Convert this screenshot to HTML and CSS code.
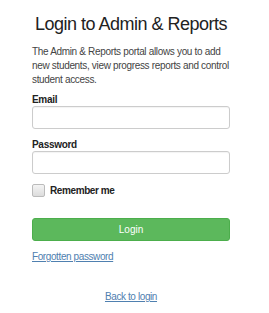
FILE: index.html
```html
<!DOCTYPE html>
<html lang="en">
<head>
    <meta charset="UTF-8">
    <meta name="viewport" content="width=device-width, initial-scale=1.0">
    <title>Login to Admin &amp; Reports</title>
    <link rel="stylesheet" href="styles.css">
</head>
<body>
    <div class="login-box">
        <h1>Login to Admin &amp; Reports</h1>
        <p class="intro">The Admin &amp; Reports portal allows you to add new students, view progress reports and control student access.</p>
        <form class="login-form">
            <label class="field-label" for="email">Email</label>
            <input class="field" type="email" id="email">
            <label class="field-label" for="password">Password</label>
            <input class="field" type="password" id="password">
            <label class="remember">
                <span class="checkbox"></span>
                Remember me
            </label>
            <button type="button" class="btn-login">Login</button>
            <a href="#" class="link">Forgotten password</a>
        </form>
        <div class="back">
            <a href="#" class="link">Back to login</a>
        </div>
    </div>
</body>
</html>
```

FILE: styles.css
```css
/* Reset */
body, h1, p, form {
    margin: 0;
    padding: 0;
    box-sizing: border-box;
}

body {
    font-family: 'Liberation Sans', Arial, sans-serif;
    background: #fff;
    color: #333;
}

.login-box {
    width: 198px;
    margin-left: 32px;
    padding-top: 13px;
}

h1 {
    font-size: 18px;
    font-weight: normal;
    letter-spacing: -0.5px;
    text-align: center;
    line-height: 22px;
    color: #222;
    margin-bottom: 10px;
}

.intro {
    font-size: 10px;
    letter-spacing: -0.33px;
    line-height: 14px;
    color: #444;
    margin-bottom: 7px;
}

.login-form {
    display: flex;
    flex-direction: column;
}

.field-label {
    font-size: 10px;
    font-weight: bold;
    letter-spacing: -0.3px;
    line-height: 12px;
    color: #222;
}

.field {
    box-sizing: border-box;
    width: 198px;
    height: 23px;
    border: 1px solid #ccc;
    border-radius: 3px;
    margin: 0 0 10px 0;
    padding: 0 6px;
    box-shadow: inset 0 1px 1px rgba(0, 0, 0, 0.05);
}

.remember {
    display: flex;
    align-items: center;
    gap: 5px;
    font-size: 10px;
    font-weight: bold;
    letter-spacing: -0.4px;
    color: #222;
    height: 13px;
    margin-bottom: 21px;
}

.checkbox {
    box-sizing: border-box;
    width: 13px;
    height: 13px;
    border: 1px solid #bbb;
    border-radius: 2px;
    background: linear-gradient(#f4f4f4, #dcdcdc);
}

.btn-login {
    height: 23px;
    border: 1px solid #4cae4c;
    border-radius: 3px;
    background: #5cb85c;
    color: #fff;
    font-family: inherit;
    font-size: 10px;
    margin-bottom: 10px;
}

.link {
    font-size: 10px;
    letter-spacing: -0.4px;
    line-height: 12px;
    color: #4f80b0;
    text-decoration: underline;
    align-self: flex-start;
}

.back {
    text-align: center;
    line-height: 12px;
    margin-top: 26px;
}
```
